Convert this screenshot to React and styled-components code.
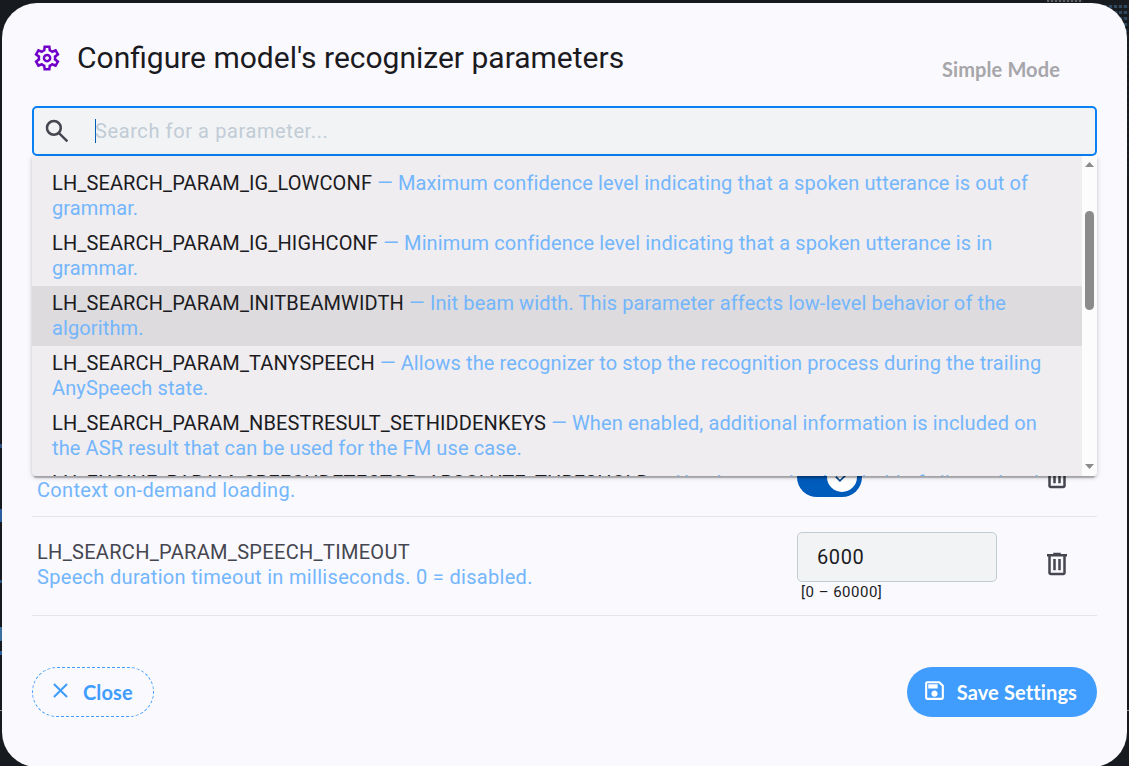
import React from 'react';
import styled, { createGlobalStyle, css } from 'styled-components';

const GlobalStyle = createGlobalStyle`
  * {
    box-sizing: border-box;
  }

  body {
    margin: 0;
    background: #171b1f;
    font-family: Roboto, sans-serif;
    overflow: hidden;
  }
`;

// dimmed page that shows around the rounded corners of the dialog
const Backdrop = styled.div`
  height: 766px;
  padding: 3px 2px 0;
  overflow: hidden;
  background:
    linear-gradient(#2b5c9e, #2b5c9e) 0 509px / 2px 13px no-repeat,
    linear-gradient(#3a6f9f, #3a6f9f) 0 627px / 2px 14px no-repeat,
    linear-gradient(#2b5c9e, #2b5c9e) 0 651px / 2px 4px no-repeat,
    linear-gradient(#2b4f80, #2b4f80) 0 444px / 2px 4px no-repeat,
    linear-gradient(#2b4f80, #2b4f80) 0 580px / 2px 3px no-repeat,
    linear-gradient(#8a9096, #8a9096) 0 710px / 1129px 1px no-repeat,
    repeating-linear-gradient(90deg, #5d6267 0 2px, #22272b 2px 4px) 1047px 0 / 36px 2px no-repeat,
    repeating-linear-gradient(transparent 0 3px, #171b1f 3px 6px) 1094px 5px / 35px 170px no-repeat,
    repeating-linear-gradient(90deg, #2f4860 0 3px, #1b2126 3px 5px) 1094px 5px / 35px 170px no-repeat,
    #171b1f;
`;

const Dialog = styled.main`
  height: 764px;
  padding: 33px 30px 0;
  border-radius: 35px;
  background: #faf9fe;
  display: flex;
  flex-direction: column;
`;

const Header = styled.header`
  height: 70px;
  display: flex;
  justify-content: space-between;
  align-items: flex-start;
`;

const Title = styled.h1`
  margin: 0;
  height: 42px;
  display: flex;
  align-items: center;
  gap: 15px;
  font-size: 30px;
  font-weight: 400;
  color: #1b1b1f;

  svg {
    margin-top: 2px;
    color: #7000c9;
  }
`;

const ModeButton = styled.button`
  margin: 21px 37px 0 0;
  padding: 0;
  border: 0;
  background: none;
  font: 700 20px/25px Lato, sans-serif;
  letter-spacing: 0.125px;
  color: #a6a6aa;
`;

const SearchWrap = styled.div`
  position: relative;
  margin-bottom: 282px;
`;

const SearchField = styled.div`
  height: 50px;
  padding: 0 8px;
  display: flex;
  align-items: center;
  border: 2px solid #0a80f5;
  border-radius: 5px;
  background: #f1f3f5;
  color: #45464f;
`;

const Caret = styled.span`
  width: 1px;
  height: 24px;
  margin-left: 23px;
  background: #005cbb;
`;

const Placeholder = styled.span`
  margin-left: -1px;
  font-size: 20px;
  letter-spacing: 0.6px;
  color: #c1ccd6;
`;

const Panel = styled.div`
  position: absolute;
  top: 50px;
  left: 0;
  right: 0;
  z-index: 2;
  height: 320px;
  display: flex;
  overflow: hidden;
  border-radius: 0 0 4px 4px;
  background: #efedf0;
  box-shadow: 0 4px 1px -2px rgba(0, 0, 0, 0.2), 0 2px 3px rgba(0, 0, 0, 0.14), 0 1px 6px rgba(0, 0, 0, 0.12);
`;

const Options = styled.div`
  flex: 1;
  padding-top: 10px;
`;

const Option = styled.div`
  height: 60px;
  padding: 5px 32px 5px 20px;
  font-size: 20px;
  line-height: 25px;
  letter-spacing: 0.118px;
  color: #1b1b1f;
  background: ${(props) => (props.$active ? '#dddbde' : 'transparent')};
`;

const Hint = styled.span`
  color: #73b6fc;
`;

const Scrollbar = styled.div`
  width: 15px;
  padding: 6px 3px 7px;
  display: flex;
  flex-direction: column;
  align-items: center;
  background: #fcfcfc;
`;

const Arrow = styled.span`
  width: 9px;
  height: 5px;
  background: #8b8b8b;
  clip-path: ${(props) => (props.$down ? 'polygon(0 0, 100% 0, 50% 100%)' : 'polygon(0 100%, 100% 100%, 50% 0)')};
`;

const Thumb = styled.span`
  width: 9px;
  height: 99px;
  margin: 44px 0 auto;
  border-radius: 5px;
  background: #8b8b8b;
`;

const ParamText = styled.div`
  width: 760px;
  padding-top: 8px;
  font-size: 20px;
  line-height: 25px;
  letter-spacing: 0.3125px;
  color: #45464f;
`;

const Control = styled.div`
  width: 245px;
`;

const DeleteIcon = styled.div`
  height: 30px;
  margin-top: 17px;
  display: flex;
  color: #45464f;
`;

const Row = styled.div`
  height: 99px;
  padding: 15px 5px 0;
  display: flex;
  border-bottom: 1px solid #e6e5eb;

  ${(props) =>
    props.$compact &&
    css`
      height: 79px;
      padding-top: 0;
      align-items: center;

      ${ParamText} {
        padding-top: 27px;
      }

      ${DeleteIcon} {
        margin-top: 0;
      }
    `}
`;

const NumberField = styled.div`
  width: 200px;
  height: 50px;
  padding: 0 19px;
  border: 1px solid #c1ccd2;
  border-radius: 5px;
  background: #f1f3f5;
  font-size: 20px;
  line-height: 48px;
  letter-spacing: 0.625px;
  color: #1b1b1f;
`;

const Range = styled.div`
  padding: 1px 4px;
  font-size: 15px;
  line-height: 18px;
  letter-spacing: 0.5px;
  color: #1b1b1f;
`;

const Toggle = styled.div`
  width: 65px;
  height: 40px;
  padding: 5px;
  display: flex;
  justify-content: flex-end;
  border-radius: 20px;
  background: #005cbb;
`;

const Knob = styled.span`
  width: 30px;
  height: 30px;
  display: grid;
  place-items: center;
  border-radius: 50%;
  background: #fff;
  color: #00458f;
`;

const Actions = styled.footer`
  margin-top: 51px;
  display: flex;
  justify-content: space-between;
`;

const Button = styled.button`
  height: 50px;
  padding: 0 20px 0 15px;
  display: flex;
  align-items: center;
  gap: 10px;
  border-radius: 25px;
  font: 700 20px/25px Lato, sans-serif;
  letter-spacing: 0.125px;

  svg {
    margin-top: -3px;
  }

  ${(props) =>
    props.$primary
      ? css`
          border: 0;
          color: #fff;
          background: #409dfd;
        `
      : css`
          border: 1px dashed #409dfd;
          color: #409dfd;
          background: none;
        `}
`;

// icons drawn on the 960 unit grid
const icons = {
  settings:
    'm370-80-16-128q-13-5-24.500-12T307-235l-119 50L78-375l103-78q-1-7-1-13.500v-27q0-6.500 1-13.500L78-585l110-190 119 50q11-8 23-15t24-12l16-128h220l16 128q13 5 24.500 12t22.500 15l119-50 110 190-103 78q1 7 1 13.500v27q0 6.500-2 13.500l103 78-110 190-118-50q-11 8-23 15t-24 12L590-80H370Zm70-80h79l14-106q31-8 57.500-23.500T639-327l99 41 39-68-86-65q5-14 7-29.500t2-31.500q0-16-2-31.500t-7-29.500l86-65-39-68-99 42q-22-23-48.500-38.500T533-694l-13-106h-79l-14 106q-31 8-57.500 23.500T321-633l-99-41-39 68 86 64q-5 15-7 30t-2 32q0 16 2 31t7 30l-86 65 39 68 99-42q22 23 48.500 38.500T427-266l13 106Zm42-180q58 0 99-41t41-99q0-58-41-99t-99-41q-59 0-99.500 41T342-480q0 58 40.500 99t99.500 41Zm0-80q-25 0-42.500-17.500T422-480q0-25 17.500-42.500T482-540q25 0 42.500 17.500T542-480q0 25-17.500 42.500T482-420Z',
  search:
    'M784-120 532-372q-30 24-69 38t-83 14q-109 0-184.500-75.500T120-580q0-109 75.500-184.500T380-840q109 0 184.500 75.500T640-580q0 44-14 83t-38 69l252 252-56 56ZM380-400q75 0 127.500-52.500T560-580q0-75-52.500-127.500T380-760q-75 0-127.500 52.500T200-580q0 75 52.500 127.500T380-400Z',
  delete:
    'M280-120q-33 0-56.500-23.500T200-200v-520h-40v-80h200v-40h240v40h200v80h-40v520q0 33-23.500 56.500T680-120H280Zm400-600H280v520h400v-520ZM360-280h80v-360h-80v360Zm160 0h80v-360h-80v360ZM280-720v520-520Z',
  close:
    'm256-200-56-56 224-224-224-224 56-56 224 224 224-224 56 56-224 224 224 224-56 56-224-224-224 224Z',
  save:
    'M840-680v480q0 33-23.500 56.500T760-120H200q-33 0-56.500-23.500T120-200v-560q0-33 23.500-56.500T200-840h480l160 160Zm-80 34L646-760H200v560h560v-446ZM480-240q50 0 85-35t35-85q0-50-35-85t-85-35q-50 0-85 35t-35 85q0 50 35 85t85 35ZM240-560h360v-160H240v160Z',
  check: 'M382-240 154-468l57-57 171 171 367-367 57 57-424 424Z',
};

const Icon = ({ name, size }) => (
  <svg width={size} height={size} viewBox="0 -960 960 960" fill="currentColor">
    <path d={icons[name]} />
  </svg>
);

const options = [
  { name: 'LH_SEARCH_PARAM_IG_LOWCONF', hint: 'Maximum confidence level indicating that a spoken utterance is out of grammar.' },
  { name: 'LH_SEARCH_PARAM_IG_HIGHCONF', hint: 'Minimum confidence level indicating that a spoken utterance is in grammar.' },
  { name: 'LH_SEARCH_PARAM_INITBEAMWIDTH', hint: 'Init beam width. This parameter affects low-level behavior of the algorithm.' },
  { name: 'LH_SEARCH_PARAM_TANYSPEECH', hint: 'Allows the recognizer to stop the recognition process during the trailing AnySpeech state.' },
  { name: 'LH_SEARCH_PARAM_NBESTRESULT_SETHIDDENKEYS', hint: 'When enabled, additional information is included on the ASR result that can be used for the FM use case.' },
  { name: 'LH_ENGINE_PARAM_SPEECHDETECTOR_ABSOLUTE_THRESHOLD', hint: 'Used to set the threshold of silence level.' },
];

const App = () => {
  const activeOption = 2;

  return (
    <>
      <GlobalStyle />
      <Backdrop>
        <Dialog>
          <Header>
            <Title>
              <Icon name="settings" size={30} />
              Configure model's recognizer parameters
            </Title>
            <ModeButton>Simple Mode</ModeButton>
          </Header>
          <SearchWrap>
            <SearchField>
              <Icon name="search" size={30} />
              <Caret />
              <Placeholder>Search for a parameter...</Placeholder>
            </SearchField>
            <Panel>
              <Options>
                {options.map((option, index) => (
                  <Option key={option.name} $active={index === activeOption}>
                    {option.name} <Hint>— {option.hint}</Hint>
                  </Option>
                ))}
              </Options>
              <Scrollbar>
                <Arrow />
                <Thumb />
                <Arrow $down />
              </Scrollbar>
            </Panel>
          </SearchWrap>
          <Row $compact>
            <ParamText>
              <Hint>Context on-demand loading.</Hint>
            </ParamText>
            <Control>
              <Toggle>
                <Knob>
                  <Icon name="check" size={20} />
                </Knob>
              </Toggle>
            </Control>
            <DeleteIcon>
              <Icon name="delete" size={30} />
            </DeleteIcon>
          </Row>
          <Row>
            <ParamText>
              LH_SEARCH_PARAM_SPEECH_TIMEOUT
              <br />
              <Hint>Speech duration timeout in milliseconds. 0 = disabled.</Hint>
            </ParamText>
            <Control>
              <NumberField>6000</NumberField>
              <Range>[0 – 60000]</Range>
            </Control>
            <DeleteIcon>
              <Icon name="delete" size={30} />
            </DeleteIcon>
          </Row>
          <Actions>
            <Button>
              <Icon name="close" size={25} />
              Close
            </Button>
            <Button $primary>
              <Icon name="save" size={25} />
              Save Settings
            </Button>
          </Actions>
        </Dialog>
      </Backdrop>
    </>
  );
};

export default App;
